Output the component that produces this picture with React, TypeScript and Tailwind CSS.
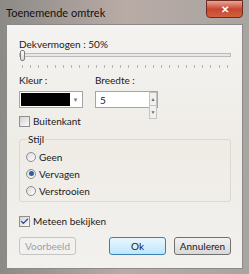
import { Check } from "lucide-react";

function Radio({ label, checked }: { label: string; checked?: boolean }) {
  return (
    <div className="flex items-center gap-[3px] h-[17px]">
      <span className="w-[10px] h-[10px] rounded-full border border-[#8d8d8d] bg-gradient-to-br from-[#dadada] to-[#ffffff] flex items-center justify-center">
        {checked && <span className="w-[5px] h-[5px] rounded-full bg-[#2d5fa8]" />}
      </span>
      <span>{label}</span>
    </div>
  );
}

function Box({ label, checked }: { label: string; checked?: boolean }) {
  return (
    <div className="flex items-center gap-[3px] h-[12px]">
      <span className="w-[11px] h-[11px] border border-[#8f8f8f] bg-gradient-to-br from-[#d4d4d4] to-[#fafafa] flex items-center justify-center">
        {checked && <Check size={9} strokeWidth={3.5} className="text-[#2b4d8c]" />}
      </span>
      <span>{label}</span>
    </div>
  );
}

function App() {
  return (
    <div
      className="w-[249px] h-[274px] bg-gradient-to-r from-[#8c8a86] via-[#b9aba6] to-[#a8a4a0] px-[6px] pb-[5px] flex flex-col text-[#1a1a1a] text-[10px] leading-[12px]"
      style={{ fontFamily: "Lato, 'Open Sans', sans-serif" }}
    >
      {/* titelbalk */}
      <div className="h-[24px] flex items-start justify-between">
        <span className="mt-[7px] text-[11px] text-[#111]">Toenemende omtrek</span>
        <div className="w-[37px] h-[18px] rounded-b-[4px] border border-[#6e2a22] bg-gradient-to-b from-[#e5a796] via-[#c9452f] to-[#d2603f] flex items-center justify-center text-white text-[10px] font-bold">
          ✕
        </div>
      </div>

      {/* inhoud */}
      <div className="flex-1 border border-[#8a8a8a] bg-gradient-to-b from-[#f4f3f1] via-[#efece6] to-[#f2f1ee] pl-[12px] pr-[11px] pt-[13px] flex flex-col">
        <span className="h-[12px]">Dekvermogen : 50%</span>

        <div className="relative h-[11px]">
          <div className="absolute left-0 right-0 top-[3px] h-[4px] border border-[#b9b9b9] bg-[#e7e7e7]" />
          <div className="absolute left-[1px] top-0 w-[5px] h-[11px] rounded-[2px] border border-[#808080] bg-gradient-to-b from-white to-[#d6d6d6]" />
        </div>
        <div className="mt-[4px] flex justify-between px-[3px]">
          {Array.from({ length: 26 }).map((_, i) => (
            <span key={i} className="w-px h-[3px] bg-[#b5b5b5]" />
          ))}
        </div>

        <div className="mt-[6px] flex gap-[12px]">
          <div className="flex flex-col">
            <span className="h-[12px]">Kleur :</span>
            <div className="mt-[5px] w-[64px] h-[17px] border border-[#a5a5a5] bg-white flex p-[1px]">
              <div className="flex-1 bg-black" />
              <div className="w-[11px] flex items-center justify-center text-[6px] text-[#7a7a7a]">▼</div>
            </div>
          </div>
          <div className="flex flex-col">
            <span className="h-[12px]">Breedte :</span>
            <div className="mt-[5px] w-[63px] h-[17px] border border-[#a5a5a5] bg-white flex">
              <span className="flex-1 pl-[4px] self-center">5</span>
              <div className="w-[8px] flex flex-col text-[5px] text-[#6a6a6a]">
                <span className="flex-1 flex items-center justify-center border border-[#c3c3c3] bg-[#f0f0f0]">▲</span>
                <span className="flex-1 flex items-center justify-center border border-t-0 border-[#c3c3c3] bg-[#f0f0f0]">▼</span>
              </div>
            </div>
          </div>
        </div>

        <div className="mt-[7px]">
          <Box label="Buitenkant" />
        </div>

        <fieldset className="mt-[6px] border border-[#dcd9d4] rounded-[3px] px-[6px] pb-[2px]">
          <legend className="h-[12px] px-[1px] ml-[1px]">Stijl</legend>
          <div className="mt-[3px] flex flex-col">
            <Radio label="Geen" />
            <Radio label="Vervagen" checked />
            <Radio label="Verstrooien" />
          </div>
        </fieldset>

        <div className="mt-[13px]">
          <Box label="Meteen bekijken" checked />
        </div>

        <div className="mt-[10px] flex items-center">
          <div className="w-[57px] h-[18px] border border-[#c4c4c4] rounded-[3px] bg-[#f2f1ef] text-[#a0a0a0] flex items-center justify-center">
            Voorbeeld
          </div>
          <div className="ml-auto w-[57px] h-[18px] border border-[#3c7fb1] rounded-[3px] bg-gradient-to-b from-[#eaf6fd] to-[#bee6fd] flex items-center justify-center">
            Ok
          </div>
          <div className="ml-[8px] w-[57px] h-[18px] border border-[#707070] rounded-[3px] bg-gradient-to-b from-[#f2f2f2] to-[#d8d8d8] flex items-center justify-center">
            Annuleren
          </div>
        </div>
      </div>
    </div>
  );
}

export default App;
